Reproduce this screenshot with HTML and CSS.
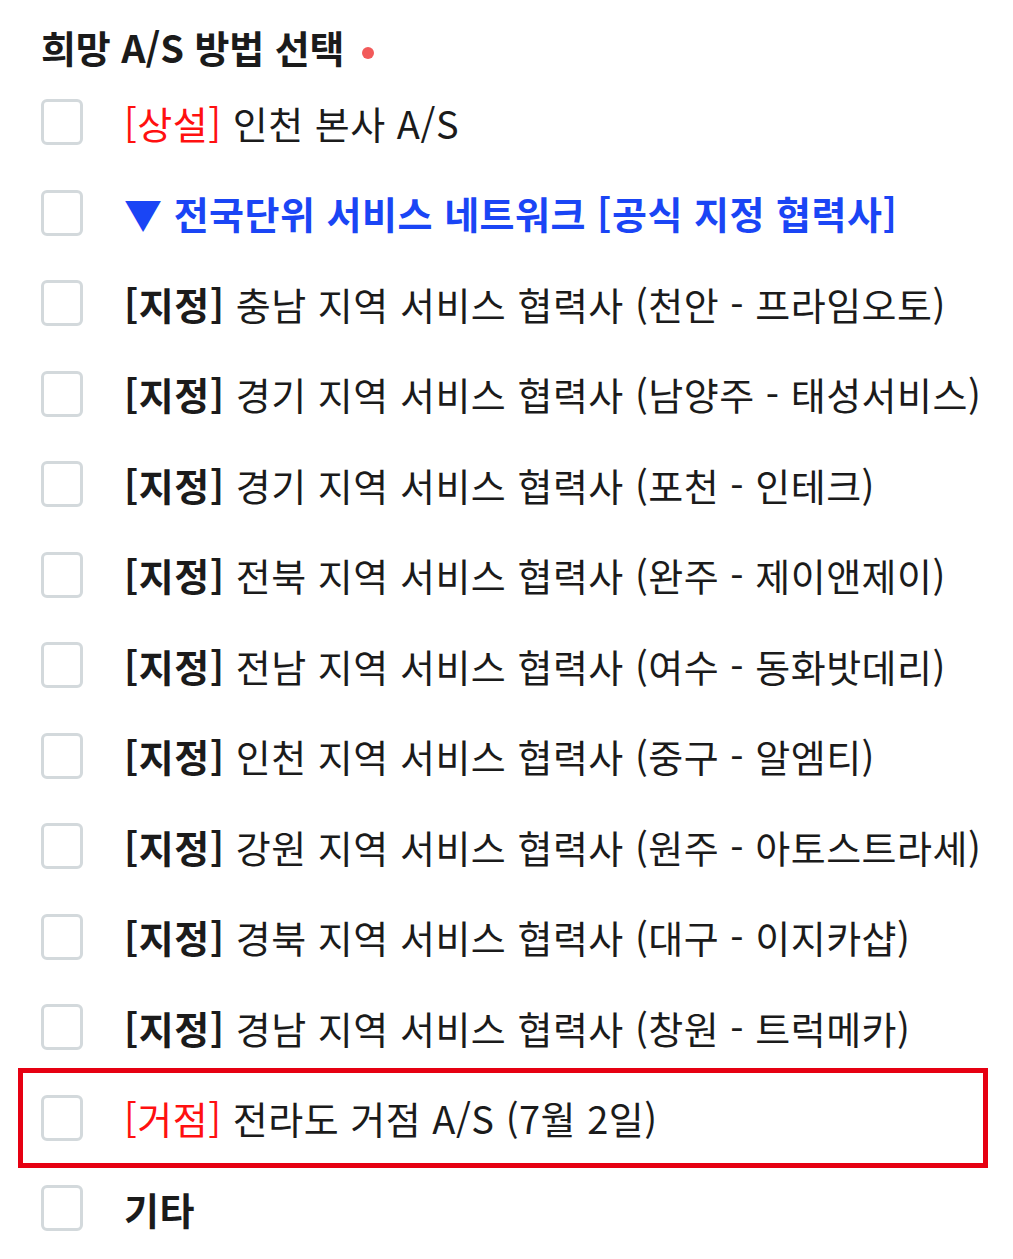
FILE: index.html
```html
<!DOCTYPE html>
<html lang="ko">
<head>
    <meta charset="UTF-8">
    <meta name="viewport" content="width=device-width, initial-scale=1.0">
    <title>희망 A/S 방법 선택</title>
    <link rel="stylesheet" href="styles.css">
</head>
<body>
    <div class="as-form">
        <h3 class="as-title">희망 A/S 방법 선택 <span class="required"></span></h3>
        <div class="as-options">
            <label class="option"><input type="checkbox" name="as"><span class="text"><span class="tag-red">[상설]</span> 인천 본사 A/S</span></label>
            <label class="option"><input type="checkbox" name="as"><span class="text network">▼ 전국단위 서비스 네트워크 [공식 지정 협력사]</span></label>
            <label class="option"><input type="checkbox" name="as"><span class="text"><b>[지정]</b> 충남 지역 서비스 협력사 (천안 - 프라임오토)</span></label>
            <label class="option"><input type="checkbox" name="as"><span class="text"><b>[지정]</b> 경기 지역 서비스 협력사 (남양주 - 태성서비스)</span></label>
            <label class="option"><input type="checkbox" name="as"><span class="text"><b>[지정]</b> 경기 지역 서비스 협력사 (포천 - 인테크)</span></label>
            <label class="option"><input type="checkbox" name="as"><span class="text"><b>[지정]</b> 전북 지역 서비스 협력사 (완주 - 제이앤제이)</span></label>
            <label class="option"><input type="checkbox" name="as"><span class="text"><b>[지정]</b> 전남 지역 서비스 협력사 (여수 - 동화밧데리)</span></label>
            <label class="option"><input type="checkbox" name="as"><span class="text"><b>[지정]</b> 인천 지역 서비스 협력사 (중구 - 알엠티)</span></label>
            <label class="option"><input type="checkbox" name="as"><span class="text"><b>[지정]</b> 강원 지역 서비스 협력사 (원주 - 아토스트라세)</span></label>
            <label class="option"><input type="checkbox" name="as"><span class="text"><b>[지정]</b> 경북 지역 서비스 협력사 (대구 - 이지카샵)</span></label>
            <label class="option"><input type="checkbox" name="as"><span class="text"><b>[지정]</b> 경남 지역 서비스 협력사 (창원 - 트럭메카)</span></label>
            <label class="option marked"><input type="checkbox" name="as"><span class="text"><span class="tag-red">[거점]</span> 전라도 거점 A/S (7월 2일)</span></label>
            <label class="option"><input type="checkbox" name="as"><span class="text"><b>기타</b></span></label>
        </div>
    </div>
</body>
</html>
```

FILE: styles.css
```css
body {
    margin: 0;
    background: #fff;
    color: #1b1b1b;
    font-family: "Noto Sans CJK KR", "Noto Sans", sans-serif;
}
.as-form {
    width: 960px;
    padding: 22px 0 0 23px;
}
.as-title {
    margin: 0 0 5px;
    padding-left: 18px;
    height: 50px;
    line-height: 50px;
    font-size: 38px;
    font-weight: 700;
    letter-spacing: -0.1px;
}
.required {
    display: inline-block;
    width: 12px;
    height: 12px;
    margin-left: 7px;
    border-radius: 50%;
    background: #f25a5a;
    vertical-align: middle;
}
.option {
    display: flex;
    align-items: center;
    height: 90.5px;
    padding-left: 18px;
    cursor: pointer;
}
.option input {
    appearance: none;
    -webkit-appearance: none;
    flex: none;
    width: 42px;
    height: 46px;
    margin: 0 41px 0 0;
    border: 3px solid #d3d9dc;
    border-radius: 6px;
    background: #fff;
}
.option .text {
    font-size: 38px;
    letter-spacing: 0.5px;
    white-space: nowrap;
}
.option b {
    font-weight: 700;
}
.tag-red {
    color: #ff1010;
}
.network {
    color: #1a45f5;
    font-weight: 700;
}
.marked {
    outline: 5px solid #e60012;
}
```
